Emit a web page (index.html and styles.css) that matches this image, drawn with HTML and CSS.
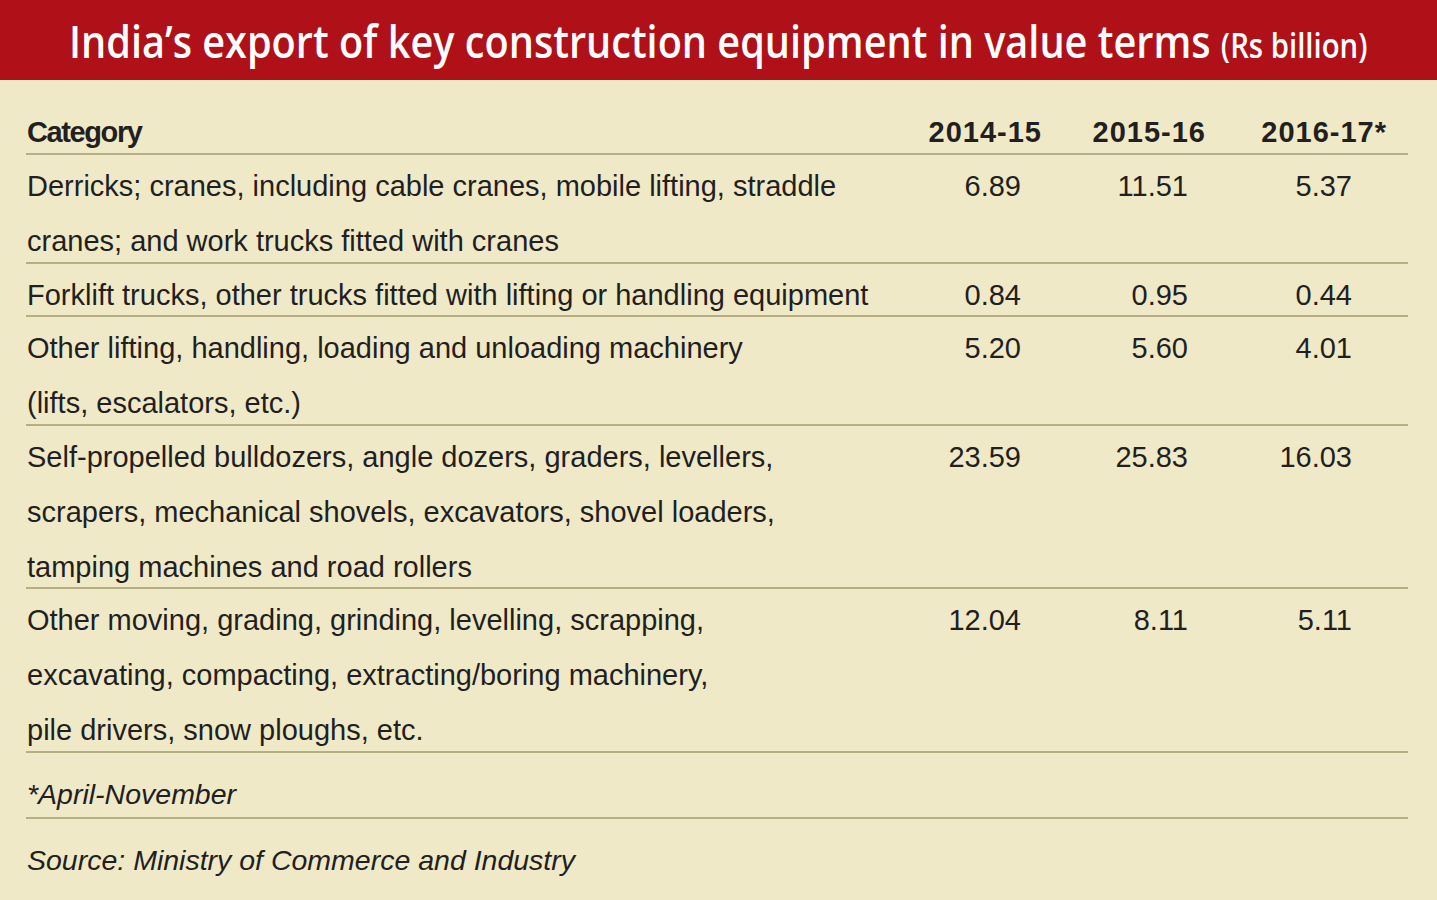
FILE: index.html
```html
<!DOCTYPE html>
<html lang="en">
<head>
<meta charset="utf-8">
<title>India’s export of key construction equipment in value terms</title>
<link rel="stylesheet" href="styles.css">
</head>
<body>
<header class="banner">
  <h1 class="title"><span class="title-main">India’s export of key construction equipment in value terms</span> <span class="title-unit">(Rs billion)</span></h1>
</header>
<main class="table">
  <div class="row head">
    <div class="cell cat">Category</div>
    <div class="cell yr">2014-15</div>
    <div class="cell yr">2015-16</div>
    <div class="cell yr">2016-17*</div>
  </div>
  <div class="row data">
    <div class="cell cat">Derricks; cranes, including cable cranes, mobile lifting, straddle<br>cranes; and work trucks fitted with cranes</div>
    <div class="cell num n1">6.89</div>
    <div class="cell num n2">11.51</div>
    <div class="cell num n3">5.37</div>
  </div>
  <div class="row data">
    <div class="cell cat">Forklift trucks, other trucks fitted with lifting or handling equipment</div>
    <div class="cell num n1">0.84</div>
    <div class="cell num n2">0.95</div>
    <div class="cell num n3">0.44</div>
  </div>
  <div class="row data">
    <div class="cell cat">Other lifting, handling, loading and unloading machinery<br>(lifts, escalators, etc.)</div>
    <div class="cell num n1">5.20</div>
    <div class="cell num n2">5.60</div>
    <div class="cell num n3">4.01</div>
  </div>
  <div class="row data">
    <div class="cell cat">Self-propelled bulldozers, angle dozers, graders, levellers,<br>scrapers, mechanical shovels, excavators, shovel loaders,<br>tamping machines and road rollers</div>
    <div class="cell num n1">23.59</div>
    <div class="cell num n2">25.83</div>
    <div class="cell num n3">16.03</div>
  </div>
  <div class="row data">
    <div class="cell cat">Other moving, grading, grinding, levelling, scrapping,<br>excavating, compacting, extracting/boring machinery,<br>pile drivers, snow ploughs, etc.</div>
    <div class="cell num n1">12.04</div>
    <div class="cell num n2">8.11</div>
    <div class="cell num n3">5.11</div>
  </div>
  <div class="note">*April-November</div>
  <div class="note">Source: Ministry of Commerce and Industry</div>
</main>
</body>
</html>
```
FILE: styles.css
```css
html, body {
  margin: 0;
  padding: 0;
}
body {
  background: #efe9c8;
  color: #231f20;
  font-family: "Liberation Sans", Arial, sans-serif;
  font-size: 29px;
  height: 900px;
  overflow: hidden;
}
.banner {
  background: #b01018;
  height: 80px;
  display: flex;
  justify-content: center;
  align-items: flex-start;
  overflow: hidden;
}
.title {
  flex: none;
  margin: 0;
  color: #ffffff;
  font-family: "Open Sans", "Noto Sans", sans-serif;
  font-weight: 600;
  font-size: 46px;
  line-height: 80px;
  white-space: nowrap;
  transform: scaleX(0.862);
  transform-origin: center center;
}
.title-unit {
  font-size: 34px;
}
.table {
  margin: 0 29px 0 26px;
  padding-top: 32px;
}
.row {
  display: grid;
  grid-template-columns: 1fr 160px 164px 181px;
  padding-right: 22px;
  white-space: nowrap;
}
.head {
  font-weight: 700;
  line-height: 41px;
}
.head .cat {
  letter-spacing: -1.4px;
}
.head .yr {
  text-align: right;
  letter-spacing: 1px;
  margin-right: -1px;
}
.data {
  border-top: 2px solid #b5af83;
  padding-top: 4px;
  margin-bottom: -7px;
  line-height: 54.8px;
}
.cat {
  padding-left: 1px;
}
.num {
  text-align: right;
}
.n1 { padding-right: 20px; }
.n2 { padding-right: 17px; }
.n3 { padding-right: 34px; }
.note {
  border-top: 2px solid #b5af83;
  padding: 18px 0 0 1px;
  line-height: 46px;
  font-style: italic;
  font-size: 28.5px;
}
```
